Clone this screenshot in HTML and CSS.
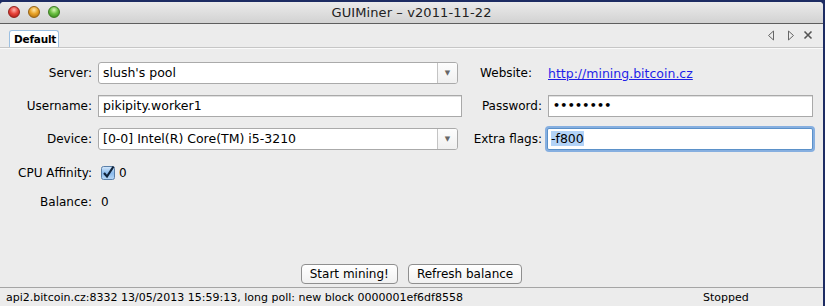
FILE: index.html
```html
<!DOCTYPE html>
<html lang="en">
<head>
    <meta charset="UTF-8">
    <meta name="viewport" content="width=device-width, initial-scale=1.0">
    <title>GUIMiner</title>
    <link rel="stylesheet" href="styles.css">
</head>
<body>
    <div class="window">
        <div class="titlebar">
            <div class="lights">
                <span class="light red"></span>
                <span class="light yellow"></span>
                <span class="light green"></span>
            </div>
            <div class="title">GUIMiner – v2011-11-22</div>
        </div>

        <div class="tabbar">
            <div class="tab">Default</div>
            <div class="tab-nav">
                <svg width="8" height="11" viewBox="0 0 8 11"><path d="M6.5 1 L1.5 5.5 L6.5 10 Z" fill="none" stroke="#666" stroke-width="1"/></svg>
                <svg width="8" height="11" viewBox="0 0 8 11"><path d="M1.5 1 L6.5 5.5 L1.5 10 Z" fill="none" stroke="#666" stroke-width="1"/></svg>
                <svg width="10" height="10" viewBox="0 0 10 10"><path d="M1.5 1.5 L8.5 8.5 M8.5 1.5 L1.5 8.5" stroke="#555" stroke-width="1.6"/></svg>
            </div>
        </div>

        <div class="content">
            <div class="form">
                <label class="label">Server:</label>
                <div class="select">
                    <span class="select-text">slush's pool</span>
                    <span class="select-arrow">▼</span>
                </div>
                <label class="label website">Website:</label>
                <a class="link" href="#">http://mining.bitcoin.cz</a>

                <label class="label">Username:</label>
                <div class="input">pikipity.worker1</div>
                <label class="label">Password:</label>
                <div class="input password">••••••••</div>

                <label class="label">Device:</label>
                <div class="select">
                    <span class="select-text">[0-0] Intel(R) Core(TM) i5-3210</span>
                    <span class="select-arrow">▼</span>
                </div>
                <label class="label">Extra flags:</label>
                <div class="input focused"><span class="selected">-f800</span></div>
            </div>

            <div class="extra">
                <div class="extra-row">
                    <span class="label">CPU Affinity:</span>
                    <span class="check">
                        <svg width="15" height="15" viewBox="0 0 15 15">
                            <defs>
                                <linearGradient id="cb" x1="0" y1="0" x2="0" y2="1">
                                    <stop offset="0" stop-color="#d6e8fa"/>
                                    <stop offset="0.5" stop-color="#8bbbec"/>
                                    <stop offset="1" stop-color="#b8d8f6"/>
                                </linearGradient>
                            </defs>
                            <rect x="0.5" y="1.5" width="13" height="13" rx="2" fill="url(#cb)" stroke="#5a7fa8"/>
                            <path d="M3 8 L6 11.5 L12.5 1.5" fill="none" stroke="#10243c" stroke-width="2.2"/>
                        </svg>
                        0
                    </span>
                </div>
                <div class="extra-row">
                    <span class="label">Balance:</span>
                    <span class="value">0</span>
                </div>
            </div>

            <div class="buttons">
                <button class="btn">Start mining!</button>
                <button class="btn">Refresh balance</button>
            </div>
        </div>

        <div class="statusbar">
            <span class="status-text">api2.bitcoin.cz:8332 13/05/2013 15:59:13, long poll: new block 0000001ef6df8558</span>
            <span class="status-state">Stopped</span>
        </div>
    </div>
</body>
</html>
```

FILE: styles.css
```css
body {
    margin: 0;
    background: #1d2c63;
    font-family: "DejaVu Sans", "Liberation Sans", sans-serif;
    font-size: 12px;
    color: #000;
}

.window {
    width: 823px;
    height: 304px;
    margin-top: 2px;
    background: #ececec;
    border-top-left-radius: 4px;
    border-top-right-radius: 4px;
    display: flex;
    flex-direction: column;
    overflow: hidden;
}

.titlebar {
    height: 21px;
    position: relative;
    background: linear-gradient(#ebebeb, #d2d2d2);
    border-bottom: 1px solid #5e5e5e;
    display: flex;
    align-items: center;
    justify-content: center;
}

.lights {
    position: absolute;
    left: 8px;
    top: 4px;
    display: flex;
    gap: 8px;
}

.light {
    width: 12px;
    height: 12px;
    border-radius: 50%;
    box-sizing: border-box;
}

.red {
    background: radial-gradient(circle at 50% 30%, #ffb3ad 0, #e8453c 45%, #a3140f 100%);
    border: 1px solid #90201b;
}

.yellow {
    background: radial-gradient(circle at 50% 30%, #ffe7a8 0, #eaa52a 45%, #a5650a 100%);
    border: 1px solid #946014;
}

.green {
    background: radial-gradient(circle at 50% 30%, #d8f7b8 0, #6cc043 45%, #2c7c13 100%);
    border: 1px solid #3c7a22;
}

.title {
    font-size: 13px;
    color: #222;
    letter-spacing: 0.1px;
}

.tabbar {
    height: 23px;
    display: flex;
    align-items: flex-end;
    justify-content: space-between;
    padding: 0 10px 0 9px;
    border-bottom: 1px solid #c6c6c6;
    box-shadow: 0 1px 0 #fafafa;
}

.tab {
    height: 16px;
    padding: 0 2px 0 4px;
    font-size: 10.5px;
    font-weight: bold;
    line-height: 16px;
    letter-spacing: -0.2px;
    background: #fff;
    border: 1px solid #9cc0e2;
    border-bottom: none;
    border-radius: 3px 3px 0 0;
}

.tab-nav {
    display: flex;
    align-items: center;
    gap: 12px;
    height: 22px;
    margin-bottom: 1px;
}

.tab-nav svg:last-child {
    margin-left: -4px;
}

.content {
    flex: 1;
    display: flex;
    flex-direction: column;
}

.form {
    display: grid;
    grid-template-columns: 92px 364px 74px 265px;
    column-gap: 6px;
    row-gap: 11px;
    margin-top: 14px;
    align-items: center;
}

.form > :nth-child(4n+3) {
    margin-left: 2px;
}

.label {
    text-align: right;
    white-space: nowrap;
}

.website {
    margin-right: 10px;
}

.input,
.select {
    height: 22px;
    box-sizing: border-box;
    background: #fff;
    line-height: 20px;
    padding-left: 4px;
    font-size: 12.5px;
    white-space: nowrap;
    overflow: hidden;
}

.input {
    border: 1px solid #a9a9a9;
    box-shadow: inset 0 1px 0 #e0e0e0;
}

.password {
    font-size: 11px;
    font-weight: bold;
    letter-spacing: 0.3px;
}

.focused {
    border: 1px solid #5b91c9;
    box-shadow: 0 0 0 2px #86afe0;
    border-radius: 2px;
    margin: 0 0 0 -1px;
    padding-left: 3px;
}

.selected {
    background: #b3d3f7;
}

.select {
    width: 360px;
    display: flex;
    justify-content: space-between;
    border: 1px solid #aaa;
    border-radius: 3px;
    padding-left: 4px;
}

.select-arrow {
    width: 19px;
    border-left: 1px solid #c4c4c4;
    text-align: center;
    font-size: 7px;
    color: #666;
    background: linear-gradient(#fdfdfd, #f0f0f0);
}

.link {
    color: #1f1fe8;
    font-size: 12.5px;
    text-decoration: underline;
}

.extra {
    display: flex;
    flex-direction: column;
    gap: 12px;
    margin-top: 14px;
}

.extra-row {
    display: flex;
    align-items: center;
    height: 17px;
}

.extra-row .label {
    width: 92px;
}

.check {
    display: flex;
    align-items: center;
    gap: 3px;
    margin-left: 9px;
}

.value {
    margin-left: 9px;
}

.buttons {
    margin-top: auto;
    margin-bottom: 3px;
    display: flex;
    justify-content: center;
    gap: 10px;
}

.btn {
    height: 20px;
    padding: 0 8px;
    font-family: "DejaVu Sans", "Liberation Sans", sans-serif;
    font-size: 12px;
    color: #000;
    background: linear-gradient(#ffffff, #f1f1f1);
    border: 1px solid #8f8f8f;
    border-radius: 4px;
}

.statusbar {
    height: 18px;
    border-top: 1px solid #a5a5a5;
    display: flex;
    align-items: center;
    padding-left: 6px;
    font-size: 11px;
}

.status-text {
    width: 697px;
    white-space: nowrap;
}
```
